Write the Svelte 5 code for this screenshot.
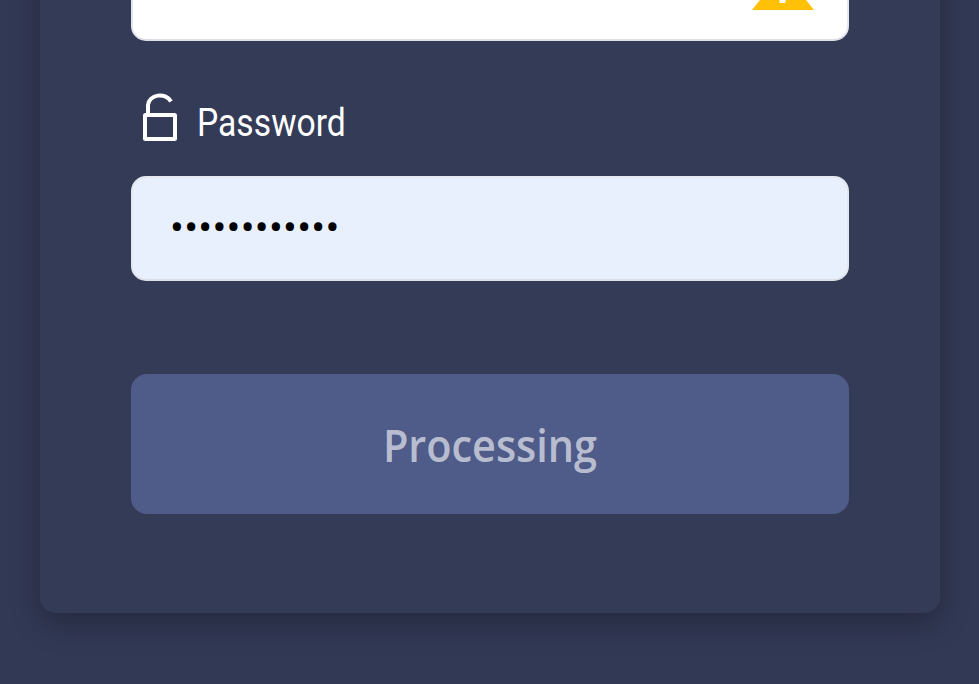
<script>
  let password = $state('............');
  let busy = $state(true);
</script>

<div class="page">
  <form class="card">
    <div class="field">
      <div class="input filled">
        <svg class="warn" viewBox="0 0 62 40" width="62" height="40" aria-hidden="true">
          <path d="M31 1 L62 40 H0 Z" fill="#ffc107"></path>
          <rect x="27.500" y="20" width="6" height="13" rx="1" fill="#fff"></rect>
        </svg>
      </div>
    </div>

    <div class="field">
      <label class="label" for="pw">
        <svg viewBox="0 0 36 50" width="36" height="50" fill="none" stroke="currentColor" stroke-width="4" aria-hidden="true">
          <rect x="4" y="22" width="30" height="24" rx="0.500"></rect>
          <path d="M7 21 V12 A12 10 0 0 1 30 8.500"></path>
        </svg>
        <span>Password</span>
      </label>
      <input id="pw" class="input autofill" type="password" bind:value={password} />
    </div>

    <button class="submit" type="button" disabled={busy}><span>Processing</span></button>
  </form>
</div>

<style>
  :global(body) {
    margin: 0;
    background: #323955;
  }

  .page {
    height: 684px;
    overflow: hidden;
    display: flex;
    flex-direction: column;
    justify-content: flex-end;
    padding: 0 39px 71px 40px;
    box-sizing: border-box;
  }

  .card {
    flex: none;
    display: flex;
    flex-direction: column;
    padding: 0 91px 99px;
    background: #343b57;
    border-radius: 16px;
    box-shadow: 0 10px 30px rgba(0, 0, 0, 0.28);
  }

  .field { display: flex; flex-direction: column; }
  .field + .field { margin-top: 52px; }

  .label {
    display: flex;
    align-items: center;
    gap: 20px;
    height: 50px;
    margin-bottom: 33px;
    padding-left: 10px;
    color: #fff;
    font-family: Roboto, sans-serif;
    font-size: 38px;
  }
  .label span {
    display: inline-block;
    padding-top: 10px;
    transform: scaleX(0.886);
    transform-origin: left center;
  }

  .input {
    box-sizing: border-box;
    width: 100%;
    height: 105px;
    padding: 0 37px;
    background: #fff;
    border: 2px solid #e4e7ee;
    border-bottom-color: #dcdfe6;
    border-radius: 15px;
    outline: none;
  }
  .filled { position: relative; }
  .warn { position: absolute; right: 33px; bottom: 29px; }
  .autofill {
    background: #e8f0fe;
    color: #000;
    font-family: Roboto, sans-serif;
    font-size: 41px;
    letter-spacing: 0.3px;
    padding-bottom: 2px;
  }

  .submit {
    height: 140px;
    margin-top: 93px;
    border: none;
    border-radius: 16px;
    background: #4f5b89;
    color: rgba(255, 255, 255, 0.62);
    font-family: "Open Sans", sans-serif;
    font-size: 46px;
    font-weight: 600;
  }
  .submit span { display: inline-block; transform: scaleX(0.9); }
</style>
